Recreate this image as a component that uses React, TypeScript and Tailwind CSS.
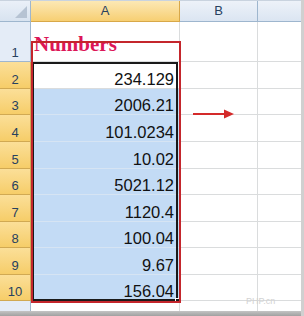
import React from "react";

const values = ["234.129", "2006.21", "101.0234", "10.02", "5021.12", "1120.4", "100.04", "9.67", "156.04"];
const rowHeights = ["h-[27px]", "h-[26px]", "h-[27px]", "h-[27px]", "h-[26px]", "h-[27px]", "h-[26px]", "h-[27px]", "h-[26px]"];

function RowHeader({label, selected, className}: {label: string; selected?: boolean; className?: string}) {
  return (
    <div
      className={`flex items-end justify-center border-r border-b pb-[2px] text-[13px] leading-none text-[#27415f] ${
        selected ? "border-[#d1a952] bg-gradient-to-b from-[#fbdf98] to-[#f6cd68]" : "border-[#9eb6ce] bg-[#e4ecf7]"
      } ${className ?? ""}`}
    >
      {label}
    </div>
  );
}

export default function App() {
  return (
    <div className="relative h-[316px] w-[304px] overflow-hidden bg-white font-['Liberation_Sans',Arial,sans-serif]">
      {/* header row */}
      <div className="flex h-[22px] border-t border-[#c9d3df]">
        <div className="relative w-[31px] border-r border-b border-[#9eb6ce] bg-gradient-to-b from-[#eaf0f8] to-[#d8e3f0]">
          <svg className="absolute bottom-[3px] right-[3px]" width="12" height="12" viewBox="0 0 12 12">
            <polygon points="12,0 12,12 0,12" fill="#b6c3d3" />
          </svg>
        </div>
        <div className="flex w-[149px] items-center justify-center border-r border-b border-[#d8a849] bg-gradient-to-b from-[#fce8b4] to-[#f7cf72] text-[13px] text-[#27415f]">
          A
        </div>
        <div className="flex w-[78px] items-center justify-center border-r border-b border-[#9eb6ce] bg-gradient-to-b from-[#edf2f9] to-[#dbe5f2] text-[13px] text-[#27415f]">
          B
        </div>
        <div className="w-[46px] border-b border-[#9eb6ce] bg-gradient-to-b from-[#edf2f9] to-[#dbe5f2]" />
      </div>

      {/* row 1 */}
      <div className="flex h-[40px]">
        <RowHeader label="1" className="w-[31px]" />
        <div className="flex w-[149px] items-end border-r border-b border-[#dadcdd] pb-[6px] pl-[3px]">
          <span className="font-['Liberation_Serif','Times_New_Roman',serif] text-[21px] font-bold leading-none text-[#dc1658]">
            Numbers
          </span>
        </div>
        <div className="w-[78px] border-r border-b border-[#dadcdd]" />
        <div className="w-[46px] border-b border-[#dadcdd]" />
      </div>

      {/* rows 2-10 */}
      {values.map((v, i) => (
        <div key={i} className={`flex ${rowHeights[i]}`}>
          <RowHeader label={String(i + 2)} selected className="w-[31px]" />
          <div
            className={`flex w-[149px] items-end justify-end border-r border-b pr-[5px] pb-[1px] text-[16.5px] leading-none text-[#111] ${
              i === 0 ? "border-[#dadcdd] bg-white" : "border-[#d6e4f3] bg-[#c3dbf5]"
            }`}
          >
            {v}
          </div>
          <div className="w-[78px] border-r border-b border-[#dadcdd]" />
          <div className="w-[46px] border-b border-[#dadcdd]" />
        </div>
      ))}

      {/* partial row 11 */}
      <div className="flex h-[10px]">
        <div className="w-[31px] border-r border-[#9eb6ce] bg-[#e4ecf7]" />
        <div className="w-[149px] border-r border-[#dadcdd]" />
        <div className="w-[78px] border-r border-[#dadcdd]" />
        <div className="w-[46px]" />
      </div>
      <div className="h-[6px] bg-gradient-to-b from-[#c4c4c4] to-[#9a9a9a]" />

      {/* selection border */}
      <div className="absolute left-[32px] top-[62px] h-[240px] w-[146px] border-2 border-b-[3px] border-[#1a1a1a]" />
      <div className="absolute left-[175px] top-[298px] h-[5px] w-[5px] border border-white bg-[#1a1a1a]" />

      {/* red highlight box */}
      <div className="absolute left-[31px] top-[41px] h-[262px] w-[150px] border-2 border-[#c4262c]" />

      {/* arrow */}
      <svg className="absolute left-[192px] top-[108px]" width="44" height="12" viewBox="0 0 44 12">
        <line x1="1" y1="6" x2="34" y2="6" stroke="#d42a2a" strokeWidth="2" />
        <polygon points="32,1.5 42,6 32,10.5" fill="#d42a2a" />
      </svg>

      {/* right edge */}
      <div className="absolute right-0 top-0 h-full w-[3px] bg-[#d0d0d0]" />

      <span className="absolute left-[246px] top-[295px] text-[9px] text-[#d2d2d2]">PHP.cn</span>
    </div>
  );
}
